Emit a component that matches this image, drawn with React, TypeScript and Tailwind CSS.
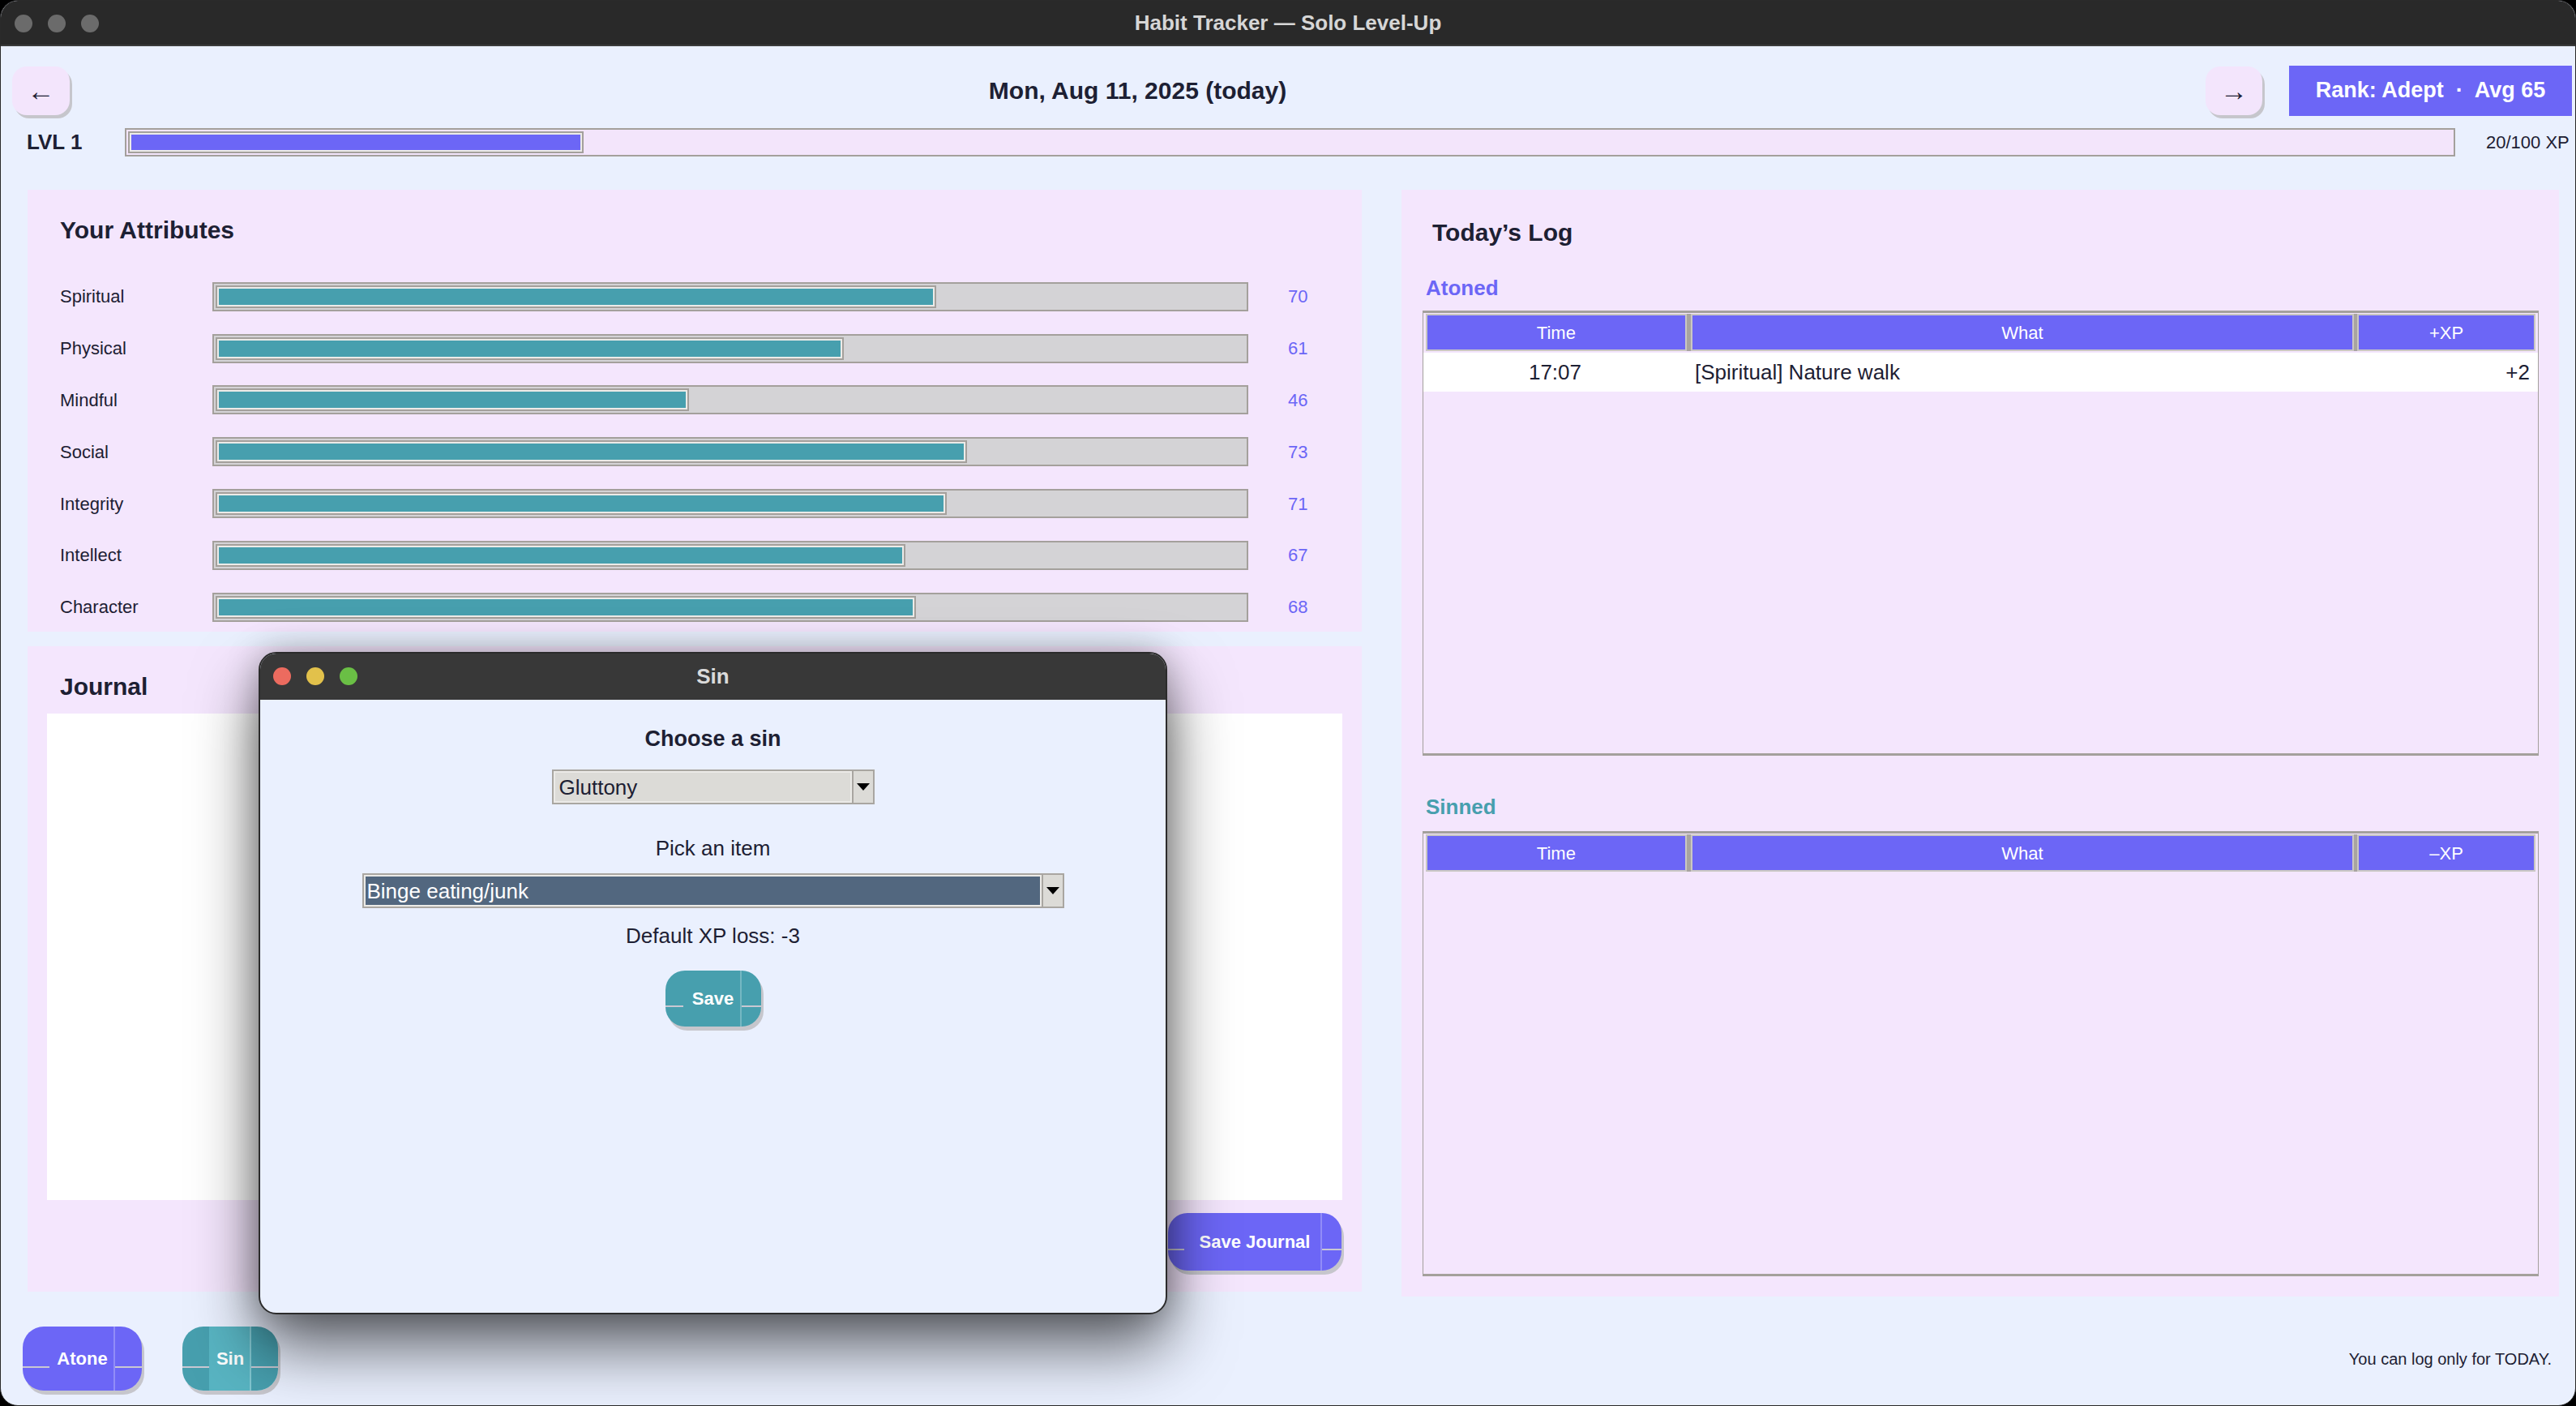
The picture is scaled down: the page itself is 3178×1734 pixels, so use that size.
import React from "react";

type BarProps = { value: number; fillClass: string; trackClass: string; heightClass: string };

function Bar({ value, fillClass, trackClass, heightClass }: BarProps) {
  return (
    <div className={`flex ${heightClass} border-2 border-[#a4a09c] ${trackClass} p-[2px]`}>
      <div className="h-full border-2 border-[#a4a09c]" style={{ width: `${value}%` }}>
        <div className={`h-full border-2 border-[#ecebe8] ${fillClass}`} />
      </div>
    </div>
  );
}

function Seams({ left, right }: { left: number; right: number }) {
  return (
    <>
      <div className="absolute left-0 top-[62%] h-[2px] bg-[#c9c8d2]" style={{ width: left }} />
      <div className="absolute right-0 top-[62%] h-[2px] bg-[#c9c8d2]" style={{ width: right }} />
      <div className="absolute top-0 bottom-0 w-[2px] bg-white/25" style={{ right: right }} />
    </>
  );
}

function DownTri() {
  return (
    <svg width="16" height="9" viewBox="0 0 16 9">
      <polygon points="0,0 16,0 8,9" fill="#000" />
    </svg>
  );
}

const attrs: [string, number][] = [
  ["Spiritual", 70],
  ["Physical", 61],
  ["Mindful", 46],
  ["Social", 73],
  ["Integrity", 71],
  ["Intellect", 67],
  ["Character", 68],
];

function TableHeader({ xp }: { xp: string }) {
  return (
    <div className="flex h-[46px] px-[3px]">
      <div className="w-[322px] border-2 border-[#cac7c3] bg-[#6c66f6] flex items-center justify-center text-white text-[22px]">Time</div>
      <div className="w-[5px] bg-[#a8a4a0]" />
      <div className="w-[819px] border-2 border-[#cac7c3] bg-[#6c66f6] flex items-center justify-center text-white text-[22px]">What</div>
      <div className="w-[4px] bg-[#a8a4a0]" />
      <div className="w-[220px] border-2 border-[#cac7c3] bg-[#6c66f6] flex items-center justify-center text-white text-[22px]">{xp}</div>
    </div>
  );
}

function Dot({ cls }: { cls: string }) {
  return <div className={`w-[22px] h-[22px] rounded-full ${cls}`} />;
}

export default function App() {
  return (
    <div className="w-[3178px] h-[1734px] bg-black font-['Liberation_Sans',Arial,sans-serif] text-[#1d2033] overflow-hidden">
      <div className="relative w-full h-full rounded-[22px] overflow-hidden bg-[#eaf0fe] flex flex-col border border-[#2a2a2a]">
        {/* Title bar */}
        <div className="relative h-[56px] shrink-0 bg-[#292929] flex items-center justify-center border-b-2 border-[#3a3a3a]">
          <div className="absolute left-[17px] top-[17px] flex gap-[19px]">
            <Dot cls="bg-[#6b6b6b]" />
            <Dot cls="bg-[#6b6b6b]" />
            <Dot cls="bg-[#6b6b6b]" />
          </div>
          <span className="text-[26px] font-bold text-[#d6d6d6]">Habit Tracker — Solo Level-Up</span>
        </div>

        {/* Top nav row */}
        <div className="mt-[23px] pl-[14px] pr-[4px] flex items-center h-[63px]">
          <div className="w-[71px] h-[60px] rounded-[18px] bg-[#f3e5fc] shadow-[3px_4px_0_#c6c6cc] flex items-center justify-center text-[34px] font-bold leading-none">←</div>
          <div className="flex-1 text-center text-[30px] font-bold">Mon, Aug 11, 2025 (today)</div>
          <div className="w-[70px] h-[60px] rounded-[18px] bg-[#f3e5fc] shadow-[3px_4px_0_#c6c6cc] flex items-center justify-center text-[34px] font-bold leading-none">→</div>
          <div className="ml-[33px] w-[349px] h-[62px] bg-[#6c66f6] text-white text-[27px] font-bold flex items-center justify-center whitespace-pre">Rank: Adept  ·  Avg 65</div>
        </div>

        {/* XP row */}
        <div className="mt-[15px] flex items-center h-[35px] pl-[32px]">
          <div className="w-[121px] text-[26px] font-bold">LVL 1</div>
          <div className="w-[2875px]">
            <Bar value={19.6} fillClass="bg-[#6c66f6]" trackClass="bg-[#f3e5fb]" heightClass="h-[35px]" />
          </div>
          <div className="ml-[38px] text-[22px]">20/100 XP</div>
        </div>

        {/* Panels */}
        <div className="mt-[41px] pl-[33px] pr-[22px] grid grid-cols-[1646px_1428px] gap-x-[49px]">
          <div className="flex flex-col">
            {/* Attributes */}
            <div className="h-[545px] bg-[#f4e6fd] pl-[40px] pt-[30px]">
              <div className="h-[40px] leading-[40px] text-[30px] font-bold">Your Attributes</div>
              <div className="mt-[30px] flex flex-col">
                {attrs.map(([name, v]) => (
                  <div key={name} className="h-[63.8px] flex items-center">
                    <div className="w-[188px] text-[22px]">{name}</div>
                    <div className="w-[1278px]">
                      <Bar value={v} fillClass="bg-[#479fae]" trackClass="bg-[#d4d3d6]" heightClass="h-[36px]" />
                    </div>
                    <div className="ml-[49px] text-[22px] text-[#6c66f6]">{v}</div>
                  </div>
                ))}
              </div>
            </div>

            {/* Journal */}
            <div className="mt-[18px] h-[796px] bg-[#f4e6fd] pt-[30px] flex flex-col">
              <div className="pl-[40px] h-[40px] leading-[40px] text-[30px] font-bold">Journal</div>
              <div className="mt-[13px] mx-[24px] h-[600px] bg-white" />
              <div className="mt-[16px] flex justify-end pr-[25px]">
                <div className="relative w-[214px] h-[71px] rounded-[24px] bg-[#6c66f6] shadow-[3px_5px_0_#c6c6cc] flex items-center justify-center text-white text-[22px] font-bold overflow-hidden">
                  <Seams left={20} right={24} />
                  <span className="relative">Save Journal</span>
                </div>
              </div>
            </div>
          </div>

          {/* Today's Log */}
          <div className="h-[1365px] bg-[#f4e6fd] pt-[33px] flex flex-col">
            <div className="pl-[38px] h-[40px] leading-[40px] text-[30px] font-bold">Today’s Log</div>
            <div className="mt-[33px] pl-[30px] h-[30px] leading-[30px] text-[26px] font-bold text-[#6c66f6]">Atoned</div>
            <div className="mt-[13px] ml-[26px] mr-[25px] h-[549px] border-t-[3px] border-b-[3px] border-x border-[#a4a09c] pt-[1px]">
              <TableHeader xp="+XP" />
              <div className="mt-[2px] h-[48px] bg-white flex items-center text-[26px]">
                <div className="w-[325px] text-center">17:07</div>
                <div className="pl-[10px] flex-1">[Spiritual] Nature walk</div>
                <div className="pr-[10px]">+2</div>
              </div>
            </div>
            <div className="mt-[48px] pl-[30px] h-[30px] leading-[30px] text-[26px] font-bold text-[#479fae]">Sinned</div>
            <div className="mt-[15px] ml-[26px] mr-[25px] h-[549px] border-t-[3px] border-b-[3px] border-x border-[#a4a09c] pt-[1px]">
              <TableHeader xp="–XP" />
            </div>
          </div>
        </div>

        {/* Bottom row */}
        <div className="mt-[37px] flex items-center h-[79px]">
          <div className="relative ml-[27px] w-[147px] h-[79px] rounded-[26px] bg-[#6c66f6] shadow-[3px_5px_0_#c6c6cc] flex items-center justify-center text-white text-[22px] font-bold overflow-hidden">
            <Seams left={33} right={33} />
            <span className="relative">Atone</span>
          </div>
          <div className="relative ml-[50px] w-[118px] h-[79px] rounded-[26px] bg-[linear-gradient(90deg,#479fae_0,#479fae_33px,#58b4c2_33px,#58b4c2_85px,#479fae_85px)] shadow-[3px_5px_0_#c6c6cc] flex items-center justify-center text-white text-[22px] font-bold overflow-hidden">
            <Seams left={33} right={33} />
            <span className="relative">Sin</span>
          </div>
          <div className="flex-1" />
          <div className="mr-[29px] text-[20px]">You can log only for TODAY.</div>
        </div>

        {/* Modal */}
        <div className="absolute left-[318px] top-[803px] w-[1121px] h-[817px] rounded-[22px] overflow-hidden bg-[#eaf0fe] border-2 border-[#2b2b2b] shadow-[0_40px_80px_rgba(0,0,0,0.6),0_0_40px_rgba(0,0,0,0.25)] flex flex-col">
          <div className="relative h-[57px] shrink-0 bg-[#383838] flex items-center justify-center">
            <div className="absolute left-[16px] top-[17px] flex gap-[19px]">
              <Dot cls="bg-[#ec6b5f]" />
              <Dot cls="bg-[#e2c14b]" />
              <Dot cls="bg-[#6abf45]" />
            </div>
            <span className="text-[26px] font-bold text-[#dadada]">Sin</span>
          </div>
          <div className="flex flex-col items-center">
            <div className="mt-[30px] h-[36px] leading-[36px] text-[27px] font-bold">Choose a sin</div>
            <div className="mt-[20px] w-[398px] h-[43px] flex border-t-2 border-b-2 border-l-2 border-[#a9a6a1] bg-[#dcdbd7]">
              <div className="flex-1 border-2 border-[#ebeae7] flex items-center pl-[5px] text-[26px] leading-none">Gluttony</div>
              <div className="w-[28px] border-l-2 border-r-2 border-[#a9a6a1] bg-[#dcdbd7] flex items-center justify-center"><DownTri /></div>
            </div>
            <div className="mt-[36px] h-[36px] leading-[36px] text-[26px]">Pick an item</div>
            <div className="mt-[13px] w-[866px] h-[43px] flex border-t-2 border-b-2 border-l-2 border-[#a9a6a1] bg-[#dcdbd7]">
              <div className="flex-1 border-2 border-[#ebeae7] bg-[#52677f] text-white flex items-center pl-[2px] text-[26px] leading-none">Binge eating/junk</div>
              <div className="w-[28px] border-l-2 border-r-2 border-[#a9a6a1] bg-[#dcdbd7] flex items-center justify-center"><DownTri /></div>
            </div>
            <div className="mt-[16px] h-[36px] leading-[36px] text-[26px]">Default XP loss: -3</div>
            <div className="relative mt-[25px] w-[118px] h-[69px] rounded-[24px] bg-[#479fae] shadow-[3px_5px_0_#c6c6cc] flex items-center justify-center text-white text-[22px] font-bold overflow-hidden">
              <Seams left={22} right={24} />
              <span className="relative">Save</span>
            </div>
          </div>
        </div>
      </div>
    </div>
  );
}
